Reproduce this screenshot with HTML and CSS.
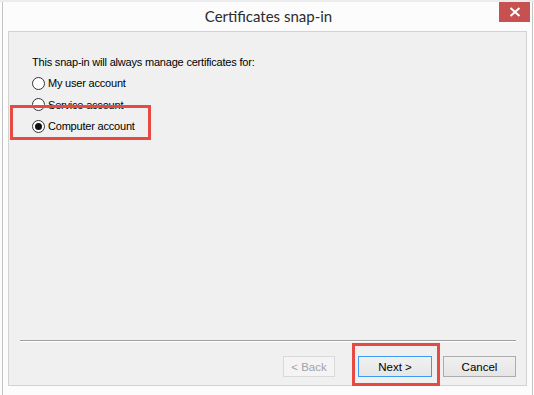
FILE: index.html
```html
<!DOCTYPE html>
<html>
<head>
<meta charset="utf-8">
<link rel="stylesheet" href="styles.css">
</head>
<body>
<div class="behind"></div>
<div class="window">
  <div class="titlebar">
    <div class="title">Certificates snap-in</div>
    <div class="close">
      <svg width="12" height="10" viewBox="0 0 12 10"><path d="M1.5 1 L10.5 9 M10.5 1 L1.5 9" stroke="#fff" stroke-width="2"/></svg>
    </div>
  </div>
  <div class="panel">
    <div class="content">
      <p class="lead">This snap-in will always manage certificates for:</p>
      <div class="options">
        <label class="opt"><span class="radio"></span>My user account</label>
        <label class="opt"><span class="radio"></span>Service account</label>
        <label class="opt"><span class="radio checked"></span>Computer account</label>
      </div>
    </div>
    <div class="footer">
      <div class="sep"></div>
      <div class="buttons">
        <button class="btn disabled">&lt; Back</button>
        <button class="btn primary">Next &gt;</button>
        <button class="btn cancel">Cancel</button>
      </div>
    </div>
    <div class="mark mark-computer"></div>
    <div class="mark mark-next"></div>
  </div>
</div>
</body>
</html>
```
FILE: styles.css
```css
* { box-sizing: border-box; }
html, body { margin: 0; padding: 0; }
body {
  width: 534px;
  height: 395px;
  overflow: hidden;
  background: #fcfcfc;
  font-family: "Liberation Sans", Arial, sans-serif;
  font-size: 11px;
  color: #000;
}
.behind {
  height: 2px;
  background: #ececec;
}
.window {
  margin-left: 2px;
  width: 531px;
  height: 393px;
  border-left: 1px solid #c4c4c4;
  border-right: 1px solid #c4c4c4;
  background: #fcfcfc;
  display: flex;
  flex-direction: column;
}
.titlebar {
  height: 29px;
  display: flex;
  position: relative;
  justify-content: center;
}
.title {
  font-family: "Lato", "Noto Sans", sans-serif;
  font-size: 15px;
  color: #2b2b2b;
  line-height: 29px;
  margin-left: 2px;
}
.close {
  position: absolute;
  right: 2px;
  top: 0;
  width: 31px;
  height: 20px;
  background: #c75050;
  display: flex;
  align-items: center;
  justify-content: center;
}
.panel {
  position: relative;
  margin-left: 5px;
  width: 519px;
  height: 355px;
  background: #f0f0f0;
  border: 1px solid #d2d2d2;
  display: flex;
  flex-direction: column;
}
.content {
  flex: 1;
  padding: 22px 0 0 23px;
  letter-spacing: -0.2px;
}
.lead {
  margin: 0 0 3px 0;
  font-size: 11px;
  line-height: 16px;
  color: #000;
}
.options {
  display: flex;
  flex-direction: column;
  gap: 1.5px;
}
.opt {
  display: flex;
  align-items: center;
  gap: 3px;
  height: 20px;
  font-size: 11px;
  color: #000;
}
.radio {
  width: 13px;
  height: 13px;
  border-radius: 50%;
  border: 1px solid #333;
  background: #fff;
  display: flex;
  align-items: center;
  justify-content: center;
}
.radio.checked::after {
  content: "";
  width: 7px;
  height: 7px;
  border-radius: 50%;
  background: #111;
}
.footer {
  padding: 0 10px 8px 11px;
}
.sep {
  height: 2px;
  border-top: 1px solid #a0a0a0;
  border-bottom: 1px solid #fff;
  margin-bottom: 14px;
}
.buttons {
  display: flex;
  justify-content: flex-end;
  gap: 11px;
}
.btn {
  height: 21px;
  font-family: inherit;
  font-size: 11.5px;
  padding: 0;
  border: 1px solid #acacac;
  background: linear-gradient(#f0f0f0, #e5e5e5);
  color: #000;
}
.btn.disabled {
  width: 52px;
  margin-right: 12px;
  color: #a3a3a3;
  border-color: #d9d9d9;
  background: #f4f4f4;
}
.btn.primary {
  width: 74px;
  border-color: #3c9bf4;
  background: linear-gradient(#f1f1f1, #e6e6e6);
}
.btn.cancel {
  width: 73px;
}
.mark {
  position: absolute;
  border: 3px solid #e64a43;
}
.mark-computer {
  left: 1px;
  top: 73px;
  width: 141px;
  height: 35px;
}
.mark-next {
  left: 343px;
  top: 311px;
  width: 88px;
  height: 43px;
}
```
